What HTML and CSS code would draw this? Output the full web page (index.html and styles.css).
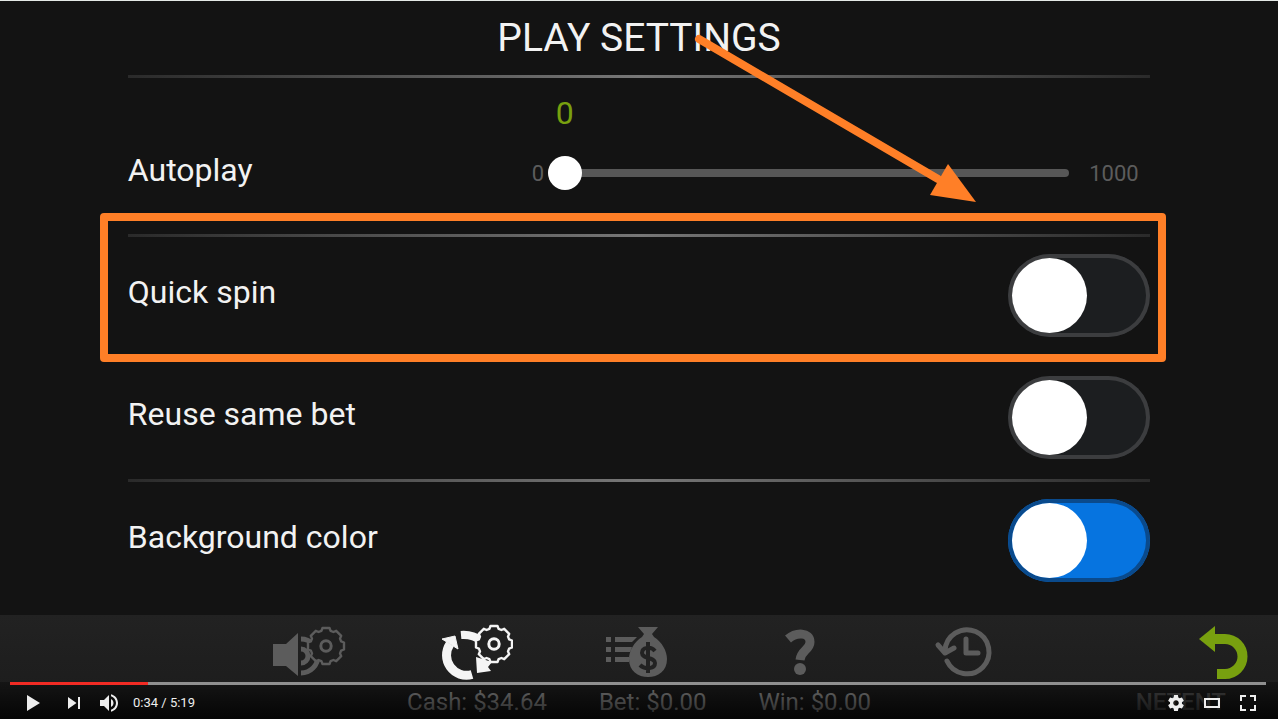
FILE: index.html
```html
<!DOCTYPE html>
<html lang="en">
<head>
<meta charset="UTF-8">
<meta name="viewport" content="width=device-width, initial-scale=1.0">
<title>Play settings</title>
<link rel="stylesheet" href="styles.css">
</head>
<body>

<svg class="symbols" aria-hidden="true">
  <symbol id="cog" viewBox="-21 -21 42 42">
    <path d="M-3.5-18H3.5L4.6-15.1 7.4-14 10.2-15.2 15.2-10.2 14-7.4 15.1-4.6 18-3.5V3.5L15.1 4.6 14 7.4 15.2 10.2 10.2 15.2 7.4 14 4.6 15.1 3.5 18H-3.5L-4.6 15.1-7.4 14-10.2 15.2-15.2 10.2-14 7.4-15.1 4.6-18 3.5V-3.5L-15.1-4.6-14-7.4-15.2-10.2-10.2-15.2-7.4-14-4.6-15.1Z" fill="#202020" stroke="currentColor" stroke-width="2.4" stroke-linejoin="round"/>
    <circle r="5.2" fill="none" stroke="currentColor" stroke-width="3"/>
  </symbol>
</svg>

<main class="settings">
  <h1 class="settings-title">PLAY SETTINGS</h1>

  <div class="autoplay-row">
    <label for="autoplay" class="row-label">Autoplay</label>
    <div class="slider-group">
      <output class="slider-value" for="autoplay">0</output>
      <span class="slider-min">0</span>
      <input type="range" id="autoplay" class="slider" min="0" max="1000" value="0">
      <span class="slider-max">1000</span>
    </div>
  </div>

  <div class="setting-row ruled quick-spin">
    <label for="quick-spin" class="row-label">Quick spin</label>
    <input type="checkbox" id="quick-spin" class="toggle">
    <div class="highlight"></div>
  </div>

  <div class="setting-row">
    <label for="reuse-bet" class="row-label">Reuse same bet</label>
    <input type="checkbox" id="reuse-bet" class="toggle">
  </div>

  <div class="setting-row ruled">
    <label for="bg-color" class="row-label">Background color</label>
    <input type="checkbox" id="bg-color" class="toggle" checked>
  </div>

  <svg class="arrow" viewBox="0 0 290 170" width="290" height="170" aria-hidden="true">
    <path d="M9 9 248 149" stroke="#ff7f27" stroke-width="8" stroke-linecap="round"/>
    <path d="M258 134 286 172 240 165Z" fill="#ff7f27"/>
  </svg>
</main>

<footer class="game-bar">
  <nav class="game-nav">
    <button class="nav-btn nav-audio" aria-label="Audio settings">
      <svg viewBox="0 0 80 60" width="80" height="60">
        <path d="M4 22H17L29 11V54L17 44H4Z" fill="currentColor"/>
        <path d="M32 17A16 16 0 0 1 32 51M32 27A7 7 0 0 1 32 41" fill="none" stroke="currentColor" stroke-width="5"/>
        <use href="#cog" x="36" y="3" width="42" height="42"/>
      </svg>
    </button>
    <button class="nav-btn nav-play" aria-label="Play settings">
      <svg viewBox="0 0 80 60" width="80" height="60">
        <path d="M17 22A20 20 0 0 0 39 52.5" fill="none" stroke="currentColor" stroke-width="9"/>
        <path d="M9 17 22 14 25 27Z" fill="currentColor" stroke="currentColor"/>
        <path d="M28 13Q39 12 49 19" fill="none" stroke="currentColor" stroke-width="8"/>
        <path d="M43 35 44 51 58 49 55 45 59 40Z" fill="currentColor"/>
        <use href="#cog" x="40" y="1" width="42" height="42"/>
      </svg>
    </button>
    <button class="nav-btn" aria-label="Bet settings">
      <svg viewBox="0 0 80 60" width="80" height="60">
        <path d="M10 15h5v5h-5zM10 25h5v5h-5zM10 35h5v5h-5zM19 15H41L36 20H19zM19 25H36L34 30H19zM19 35H33V40H19zM42 5H62L56 12 58 15C66 20 71 29 71 37C71 49 62 55 52 55C42 55 33 49 33 37C33 29 38 20 46 15L48 12Z" fill="currentColor"/>
        <path d="M59 29C55 24 46 25 46 31C46 37 59 35 59 41C59 47 49 48 44 43M52 20V51" fill="none" stroke="#222" stroke-width="4"/>
      </svg>
    </button>
    <button class="nav-btn" aria-label="Help">
      <svg viewBox="0 0 80 60" width="80" height="60">
        <path d="M28 17C36 10 50 10 50 20C50 28 41 28 40 38" fill="none" stroke="currentColor" stroke-width="9"/>
        <circle cx="40" cy="47" r="6" fill="currentColor"/>
      </svg>
    </button>
    <button class="nav-btn" aria-label="History">
      <svg viewBox="0 0 80 60" width="80" height="60">
        <g fill="none" stroke="currentColor" stroke-width="5" stroke-linecap="round" stroke-linejoin="round">
          <path d="M23 39A22 22 0 1 0 21 29"/>
          <path d="M14 23 21 31 30 26M42 17V31H54"/>
        </g>
      </svg>
    </button>
    <button class="nav-btn nav-back" aria-label="Back">
      <svg viewBox="0 0 50 60" width="50" height="60">
        <path d="M14 17H26A17 17 0 0 1 26 52H18" fill="none" stroke="currentColor" stroke-width="10"/>
        <path d="M0 17 16 4V30Z" fill="currentColor"/>
      </svg>
    </button>
  </nav>

  <div class="status">
    <span>Cash: $34.64</span>
    <span>Bet: $0.00</span>
    <span>Win: $0.00</span>
    <span class="brand">NETENT</span>
  </div>

  <!-- video player chrome over the game -->
  <div class="player">
    <input type="range" class="seek" aria-label="Seek" min="0" max="319" value="34">
    <div class="controls">
      <button class="ctl ctl-play" aria-label="Play">
        <svg viewBox="0 0 36 36"><path d="M12 10V26L25 18Z"/></svg>
      </button>
      <button class="ctl" aria-label="Next">
        <svg viewBox="0 0 36 36"><path d="M12 24 20.5 18 12 12ZM22 12V24H24V12Z"/></svg>
      </button>
      <button class="ctl" aria-label="Mute">
        <svg viewBox="0 0 36 36"><path d="M8 21H12L17 26V10L12 15H8ZM19 14V22C20.48 21.32 21.5 19.77 21.5 18C21.5 16.26 20.48 14.74 19 14ZM19 11.29C21.89 12.15 24 14.83 24 18C24 21.17 21.89 23.85 19 24.71V26.77C23.01 25.86 26 22.28 26 18C26 13.72 23.01 10.14 19 9.23Z"/></svg>
      </button>
      <span class="time">0:34 / 5:19</span>
      <button class="ctl" aria-label="Settings">
        <svg viewBox="0 0 36 36"><path d="m23.94 18.78c.03-.25.05-.51.05-.78 0-.27-.02-.52-.05-.78l1.68-1.32c.15-.12.19-.33.09-.51l-1.6-2.76c-.09-.17-.31-.24-.48-.17l-1.99.8c-.41-.32-.86-.58-1.35-.78l-.3-2.12c-.02-.19-.19-.33-.39-.33h-3.2c-.2 0-.36.14-.39.33l-.3 2.12c-.48.2-.93.47-1.35.78l-1.99-.8c-.18-.07-.39 0-.48.17l-1.6 2.76c-.1.17-.05.39.09.51l1.68 1.32c-.03.25-.05.52-.05.78 0 .26.02.52.05.78l-1.68 1.32c-.15.12-.19.33-.09.51l1.6 2.76c.09.17.31.24.48.17l1.99-.8c.41.32.86.58 1.35.78l.3 2.12c.02.19.19.33.39.33h3.2c.2 0 .36-.14.39-.33l.3-2.12c.48-.2.93-.47 1.35-.78l1.99.8c.18.07.39 0 .48-.17l1.6-2.76c.09-.17.05-.39-.09-.51zm-5.94 2.01c-1.54 0-2.8-1.25-2.8-2.8 0-1.54 1.25-2.8 2.8-2.8 1.54 0 2.8 1.25 2.8 2.8 0 1.54-1.25 2.8-2.8 2.8z"/></svg>
      </button>
      <button class="ctl" aria-label="Theater mode">
        <svg viewBox="0 0 36 36"><path fill-rule="evenodd" d="M10 13H26V23H10ZM12 15V21H24V15Z"/></svg>
      </button>
      <button class="ctl" aria-label="Full screen">
        <svg viewBox="0 0 36 36"><path d="M10 16H12V12H16V10H10ZM20 10V12H24V16H26V10ZM24 24H20V26H26V20H24ZM12 20H10V26H16V24H12Z"/></svg>
      </button>
    </div>
  </div>
</footer>

</body>
</html>
```
FILE: styles.css
```css
:root {
  --page: #131313;
  --text: #f2f2f2;
  --muted: #5c5c5c;
  --accent: #ff7f27;
  --green: #78a00f;
  --blue: #0674e0;
}

* {
  margin: 0;
  padding: 0;
  box-sizing: border-box;
}

body {
  min-height: 100vh;
  display: flex;
  flex-direction: column;
  background-color: var(--page);
  border-top: 1px solid #e4e9e6;
  color: var(--text);
  font-family: Roboto, sans-serif;
}

button {
  border: none;
  background: none;
  color: inherit;
  cursor: pointer;
}

svg {
  display: block;
}

.symbols {
  position: absolute;
  width: 0;
  height: 0;
}

/* settings panel */
.settings {
  position: relative;
  flex: 1;
  padding: 0 10%;
}

.settings-title {
  padding: 13px 0;
  font-size: 39px;
  font-weight: 400;
  line-height: 48px;
  text-align: center;
}

.autoplay-row,
.ruled {
  border-top: 3px solid;
  border-image: linear-gradient(90deg, #2a2a2a, #777 50%, #2a2a2a) 1;
}

.autoplay-row {
  display: grid;
  grid-template-columns: 39.5% 1fr;
  align-items: end;
  padding: 17px 0 44px;
}

.row-label {
  padding-bottom: 8px;
  font-size: 32px;
  line-height: 40px;
}

.autoplay-row .row-label {
  padding-bottom: 0;
}

.slider-group {
  display: grid;
  grid-template-columns: 16px 1fr 81px;
  align-items: center;
  row-gap: 25px;
}

.slider-value {
  grid-column: 2;
  width: 34px;
  color: var(--green);
  font-size: 32px;
  line-height: 36px;
  text-align: center;
}

.slider-min,
.slider-max {
  color: var(--muted);
  font-size: 22px;
}

.slider-min {
  grid-column: 1;
}

.slider-max {
  padding-left: 20px;
}

.slider {
  appearance: none;
  width: 100%;
  height: 34px;
  background: none;
}

.slider::-webkit-slider-runnable-track {
  height: 8px;
  border-radius: 4px;
  background-color: #575757;
}

.slider::-webkit-slider-thumb {
  appearance: none;
  width: 34px;
  height: 34px;
  margin-top: -13px;
  border-radius: 50%;
  background-color: #fff;
}

.setting-row {
  position: relative;
  display: flex;
  justify-content: space-between;
  align-items: center;
  padding: 20px 0;
}

.setting-row.ruled {
  padding: 17px 0 19px;
}

.toggle {
  appearance: none;
  width: 142px;
  height: 83px;
  padding: 4px;
  border-radius: 42px;
  background-color: #1c1e20;
  box-shadow: inset 0 0 0 4px #3c3d3f;
}

.toggle::before {
  content: "";
  display: block;
  width: 75px;
  height: 75px;
  border-radius: 50%;
  background-color: #fff;
}

.toggle:checked {
  background-color: var(--blue);
  box-shadow: inset 0 0 0 4px #0a4a8c;
}

/* callouts */
.highlight {
  position: absolute;
  inset: -24px -16px -6px -28px;
  border: 8px solid var(--accent);
  border-radius: 4px;
  pointer-events: none;
}

.arrow {
  position: absolute;
  top: 29px;
  left: 54%;
  overflow: visible;
  pointer-events: none;
}

/* bottom bar */
.game-bar {
  position: relative;
  background: linear-gradient(#222, #1b1b1b);
}

.game-nav {
  display: grid;
  grid-template-columns: 17.8% repeat(5, 12.8%) 1fr;
  padding-top: 7px;
  color: var(--muted);
}

.nav-btn {
  justify-self: center;
}

.nav-audio {
  grid-column: 2;
}

.nav-play {
  color: #f4f4f4;
}

.nav-back {
  justify-self: end;
  padding-right: 29px;
  color: var(--green);
}

.status {
  position: relative;
  display: flex;
  justify-content: center;
  gap: 52px;
  padding: 6px 0 2px;
  color: #a0a0a0;
  font-size: 24px;
  line-height: 29px;
}

.brand {
  position: absolute;
  right: 52px;
  color: #555;
  font-weight: 500;
}

.player {
  position: absolute;
  inset: auto 0 0;
  padding: 0 12px 0 10px;
  background: linear-gradient(rgba(0, 0, 0, 0.3), rgba(0, 0, 0, 0.8));
}

.seek {
  appearance: none;
  display: block;
  width: 100%;
  height: 3px;
  background: linear-gradient(90deg, #f12b24 11%, #8f8f8f 11%);
}

.seek::-webkit-slider-thumb {
  appearance: none;
  width: 0;
}

.controls {
  display: flex;
  height: 34px;
  color: #eee;
}

.ctl {
  width: 36px;
  height: 36px;
}

.ctl-play {
  width: 46px;
}

.ctl svg {
  width: 36px;
  height: 36px;
  margin: 0 auto;
  fill: currentColor;
}

.time {
  flex: 1;
  padding-left: 5px;
  font-size: 13px;
  line-height: 36px;
}
```
